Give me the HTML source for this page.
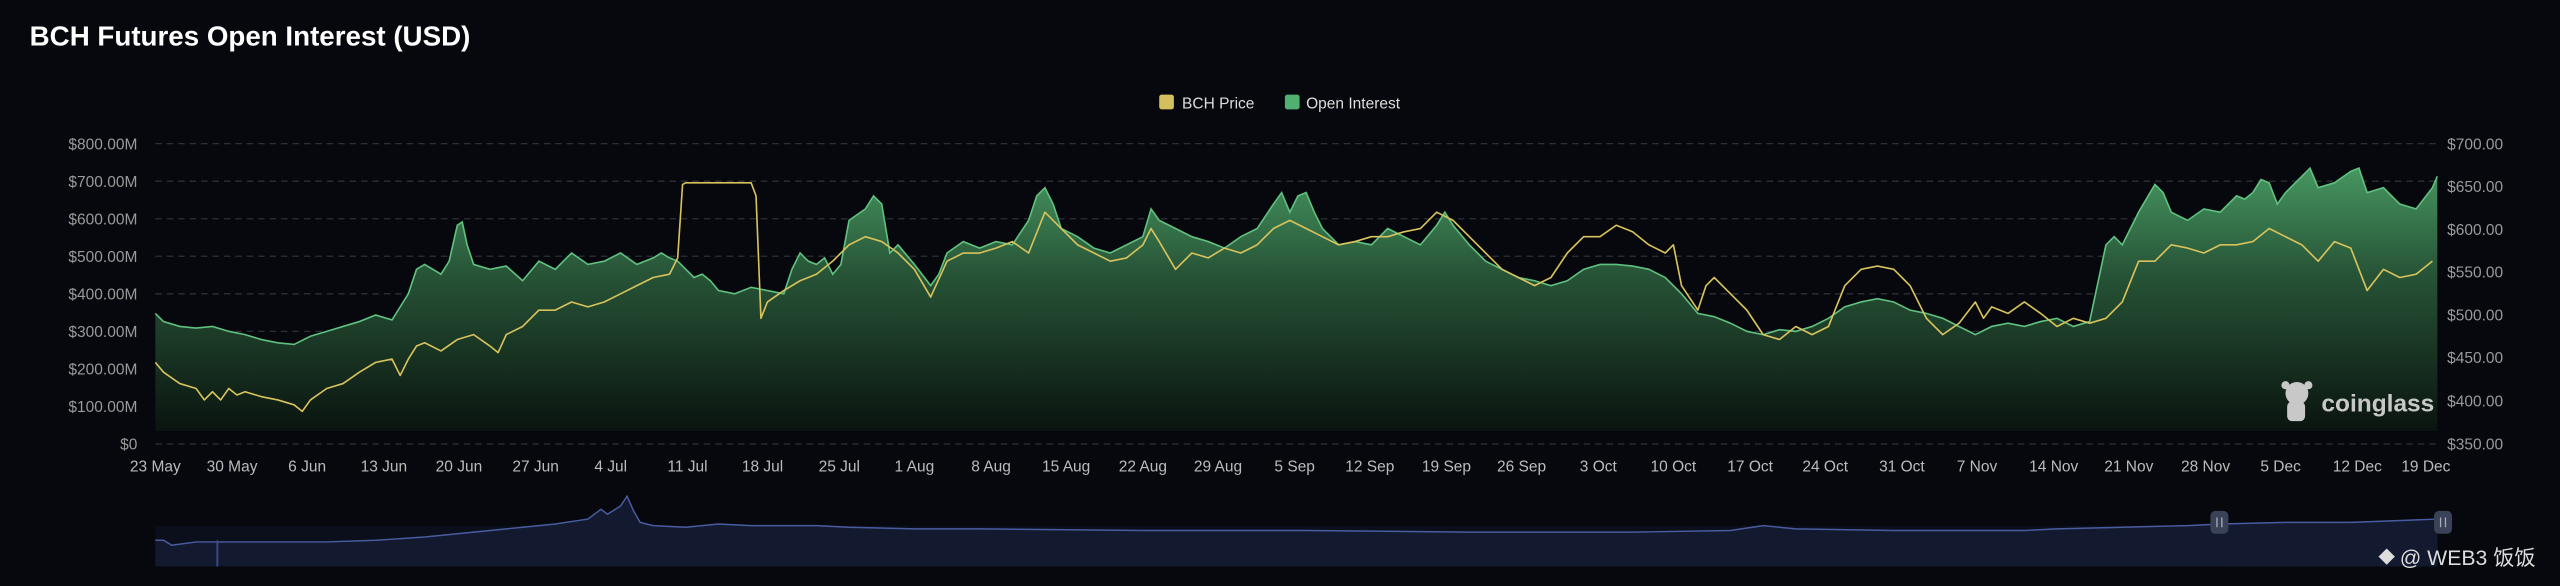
<!DOCTYPE html>
<html><head><meta charset="utf-8"><style>
html,body{margin:0;padding:0;background:#06080d;width:2560px;height:586px;overflow:hidden}
svg{display:block}
text{font-family:"Liberation Sans","Noto Sans CJK SC",sans-serif}
</style></head><body>
<svg width="2560" height="586" viewBox="0 0 1568 359" xmlns="http://www.w3.org/2000/svg">
<defs>
<linearGradient id="g" x1="0" y1="0" x2="0" y2="1">
<stop offset="0" stop-color="#469660"/><stop offset="0.4" stop-color="#275437"/><stop offset="1" stop-color="#0a140f"/>
</linearGradient>
</defs>
<rect width="1568" height="359" fill="#06080d"/>
<text x="18" y="28" fill="#fff" font-size="17" font-weight="bold">BCH Futures Open Interest (USD)</text>
<rect x="710" y="58" width="9" height="9" rx="1.5" fill="#d4bf5e"/>
<text x="724" y="66.5" fill="#ddd" font-size="9.5">BCH Price</text>
<rect x="787" y="58" width="9" height="9" rx="1.5" fill="#4fb071"/>
<text x="800" y="66.5" fill="#ddd" font-size="9.5">Open Interest</text>
<g stroke="#2c3036" stroke-dasharray="4,3" stroke-width="0.8">
<line x1="95" x2="1493" y1="88" y2="88"/><line x1="95" x2="1493" y1="111" y2="111"/><line x1="95" x2="1493" y1="134" y2="134"/><line x1="95" x2="1493" y1="157" y2="157"/><line x1="95" x2="1493" y1="180" y2="180"/><line x1="95" x2="1493" y1="203" y2="203"/><line x1="95" x2="1493" y1="226" y2="226"/><line x1="95" x2="1493" y1="249" y2="249"/><line x1="95" x2="1493" y1="272" y2="272"/>
</g>
<g fill="#9a9a9a" font-size="9.5" text-anchor="end">
<text x="84" y="91.5">$800.00M</text><text x="84" y="114.5">$700.00M</text><text x="84" y="137.5">$600.00M</text><text x="84" y="160.5">$500.00M</text><text x="84" y="183.5">$400.00M</text><text x="84" y="206.5">$300.00M</text><text x="84" y="229.5">$200.00M</text><text x="84" y="252.5">$100.00M</text><text x="84" y="275.5">$0</text>
</g>
<g fill="#9a9a9a" font-size="9.5">
<text x="1499" y="91.5">$700.00</text><text x="1499" y="117.5">$650.00</text><text x="1499" y="144">$600.00</text><text x="1499" y="170">$550.00</text><text x="1499" y="196.5">$500.00</text><text x="1499" y="222.5">$450.00</text><text x="1499" y="249">$400.00</text><text x="1499" y="275.5">$350.00</text>
</g>
<polygon fill="url(#g)" points="95,264 95,192 100,197 110,200 120,201 130,200 140,203 150,205 160,208 170,210 180,211 190,206 200,203 210,200 220,197 230,193 240,196 245,188 250,180 255,165 260,162 265,165 270,168 275,160 280,138 283,136 286,150 290,162 300,165 310,163 320,172 330,160 340,165 350,155 360,162 370,160 380,155 390,162 400,158 405,155 410,158 415,160 420,165 425,170 430,168 435,172 440,178 450,180 460,176 470,178 480,180 485,165 490,155 495,160 500,162 505,158 510,168 515,162 520,135 530,128 535,120 540,125 545,155 550,150 560,162 570,175 575,168 580,155 590,148 600,152 610,148 620,150 630,135 635,120 640,115 645,125 650,140 660,145 670,152 680,155 690,150 700,145 705,128 710,135 720,140 730,145 740,148 750,152 760,145 770,140 780,125 785,118 790,130 795,120 800,118 805,130 810,140 820,150 830,148 840,150 850,140 860,145 870,150 880,138 885,130 890,138 900,150 910,160 920,165 930,170 940,172 950,175 960,172 970,165 980,162 990,162 1000,163 1010,165 1020,170 1030,180 1040,192 1050,194 1060,198 1070,203 1080,205 1090,202 1100,203 1110,200 1120,195 1130,188 1140,185 1150,183 1160,185 1170,190 1180,192 1190,195 1200,200 1210,205 1220,200 1230,198 1240,200 1250,197 1260,195 1270,200 1280,197 1290,150 1295,145 1300,150 1310,130 1320,113 1325,118 1330,130 1340,135 1350,128 1360,130 1370,120 1375,122 1380,118 1385,110 1390,112 1395,125 1400,118 1410,108 1415,103 1420,115 1430,112 1440,105 1445,103 1450,118 1460,115 1470,125 1480,128 1490,115 1493,108 1493,264"/>
<polyline fill="none" stroke="#5fc07f" stroke-width="1" points="95,192 100,197 110,200 120,201 130,200 140,203 150,205 160,208 170,210 180,211 190,206 200,203 210,200 220,197 230,193 240,196 245,188 250,180 255,165 260,162 265,165 270,168 275,160 280,138 283,136 286,150 290,162 300,165 310,163 320,172 330,160 340,165 350,155 360,162 370,160 380,155 390,162 400,158 405,155 410,158 415,160 420,165 425,170 430,168 435,172 440,178 450,180 460,176 470,178 480,180 485,165 490,155 495,160 500,162 505,158 510,168 515,162 520,135 530,128 535,120 540,125 545,155 550,150 560,162 570,175 575,168 580,155 590,148 600,152 610,148 620,150 630,135 635,120 640,115 645,125 650,140 660,145 670,152 680,155 690,150 700,145 705,128 710,135 720,140 730,145 740,148 750,152 760,145 770,140 780,125 785,118 790,130 795,120 800,118 805,130 810,140 820,150 830,148 840,150 850,140 860,145 870,150 880,138 885,130 890,138 900,150 910,160 920,165 930,170 940,172 950,175 960,172 970,165 980,162 990,162 1000,163 1010,165 1020,170 1030,180 1040,192 1050,194 1060,198 1070,203 1080,205 1090,202 1100,203 1110,200 1120,195 1130,188 1140,185 1150,183 1160,185 1170,190 1180,192 1190,195 1200,200 1210,205 1220,200 1230,198 1240,200 1250,197 1260,195 1270,200 1280,197 1290,150 1295,145 1300,150 1310,130 1320,113 1325,118 1330,130 1340,135 1350,128 1360,130 1370,120 1375,122 1380,118 1385,110 1390,112 1395,125 1400,118 1410,108 1415,103 1420,115 1430,112 1440,105 1445,103 1450,118 1460,115 1470,125 1480,128 1490,115 1493,108"/>
<polyline fill="none" stroke="#d8c25c" stroke-width="1" stroke-linejoin="round" points="95,222 100,228 110,235 120,238 125,245 130,240 135,245 140,238 145,242 150,240 160,243 170,245 180,248 185,252 190,245 200,238 210,235 220,228 230,222 240,220 245,230 250,220 255,212 260,210 270,215 280,208 290,205 300,212 305,216 310,205 320,200 330,190 340,190 350,185 360,188 370,185 380,180 390,175 400,170 410,168 415,158 418,113 420,112 460,112 463,120 466,195 470,185 480,178 490,172 500,168 510,160 520,150 530,145 540,148 550,155 560,165 570,182 580,160 590,155 600,155 610,152 620,148 630,155 640,130 650,140 660,150 670,155 680,160 690,158 700,150 705,140 710,148 720,165 730,155 740,158 750,152 760,155 770,150 780,140 790,135 800,140 810,145 820,150 830,148 840,145 850,145 860,142 870,140 880,130 890,135 900,145 910,155 920,165 930,170 940,175 950,170 960,155 970,145 980,145 990,138 1000,142 1010,150 1020,155 1025,150 1030,175 1040,190 1045,175 1050,170 1060,180 1070,190 1080,205 1090,208 1100,200 1110,205 1120,200 1130,175 1140,165 1150,163 1160,165 1170,175 1180,195 1190,205 1200,198 1210,185 1215,195 1220,188 1230,192 1240,185 1250,192 1260,200 1270,195 1280,198 1290,195 1300,185 1310,160 1320,160 1330,150 1340,152 1350,155 1360,150 1370,150 1380,148 1390,140 1400,145 1410,150 1420,160 1430,148 1440,152 1450,178 1460,165 1470,170 1480,168 1490,160"/>
<g fill="#bbb" font-size="9.5" text-anchor="middle">
<text x="95" y="289">23 May</text><text x="142" y="289">30 May</text><text x="188" y="289">6 Jun</text><text x="235" y="289">13 Jun</text><text x="281" y="289">20 Jun</text><text x="328" y="289">27 Jun</text><text x="374" y="289">4 Jul</text><text x="421" y="289">11 Jul</text><text x="467" y="289">18 Jul</text><text x="514" y="289">25 Jul</text><text x="560" y="289">1 Aug</text><text x="607" y="289">8 Aug</text><text x="653" y="289">15 Aug</text><text x="700" y="289">22 Aug</text><text x="746" y="289">29 Aug</text><text x="793" y="289">5 Sep</text><text x="839" y="289">12 Sep</text><text x="886" y="289">19 Sep</text><text x="932" y="289">26 Sep</text><text x="979" y="289">3 Oct</text><text x="1025" y="289">10 Oct</text><text x="1072" y="289">17 Oct</text><text x="1118" y="289">24 Oct</text><text x="1165" y="289">31 Oct</text><text x="1211" y="289">7 Nov</text><text x="1258" y="289">14 Nov</text><text x="1304" y="289">21 Nov</text><text x="1351" y="289">28 Nov</text><text x="1397" y="289">5 Dec</text><text x="1444" y="289">12 Dec</text><text x="1486" y="289">19 Dec</text>
</g>
<g fill="#c8c8c8"><circle cx="1407" cy="241" r="7"/><rect x="1401" y="246" width="11" height="12" rx="3"/><circle cx="1400" cy="236" r="2.5"/><circle cx="1414" cy="236" r="2.5"/></g>
<text x="1422" y="252" fill="#c8c8c8" font-size="15" font-weight="bold">coinglass</text>
<rect x="95" y="322" width="1398" height="25" fill="#0b0f1c"/>
<rect x="1360" y="322" width="133" height="25" fill="#1a2444"/>
<polygon fill="#131a30" points="95,347 95,331 100,331 105,334 120,332 160,332 200,332 230,331 260,329 280,327 300,325 320,323 330,322 340,321 360,318 368,312 372,315 380,310 384,304 388,313 392,320 400,322 420,323 440,321 460,322 480,322 500,322 520,323 560,324 600,324 700,325 800,325 900,326 1000,326 1060,325 1080,322 1100,324 1160,325 1240,325 1260,324 1300,323 1340,322 1360,321 1400,320 1440,320 1493,318 1493,347"/>
<polyline fill="none" stroke="#4a5ca0" stroke-width="0.9" points="95,331 100,331 105,334 120,332 160,332 200,332 230,331 260,329 280,327 300,325 320,323 330,322 340,321 360,318 368,312 372,315 380,310 384,304 388,313 392,320 400,322 420,323 440,321 460,322 480,322 500,322 520,323 560,324 600,324 700,325 800,325 900,326 1000,326 1060,325 1080,322 1100,324 1160,325 1240,325 1260,324 1300,323 1340,322 1360,321 1400,320 1440,320 1493,318"/>
<line x1="133" x2="133" y1="331" y2="347" stroke="#3a4a8a" stroke-width="1.2"/>
<rect x="1354" y="313" width="11" height="14" rx="3" fill="#3a4258"/>
<rect x="1491" y="313" width="11" height="14" rx="3" fill="#3a4258"/>
<g stroke="#aab" stroke-width="0.8"><line x1="1358" x2="1358" y1="317" y2="323"/><line x1="1361" x2="1361" y1="317" y2="323"/><line x1="1495" x2="1495" y1="317" y2="323"/><line x1="1498" x2="1498" y1="317" y2="323"/></g>
<g fill="#ddd"><polygon points="1462,336 1467,341 1462,346 1457,341"/></g>
<text x="1470" y="346" fill="#ddd" font-size="13">@ WEB3 饭饭</text>
</svg>
</body></html>
